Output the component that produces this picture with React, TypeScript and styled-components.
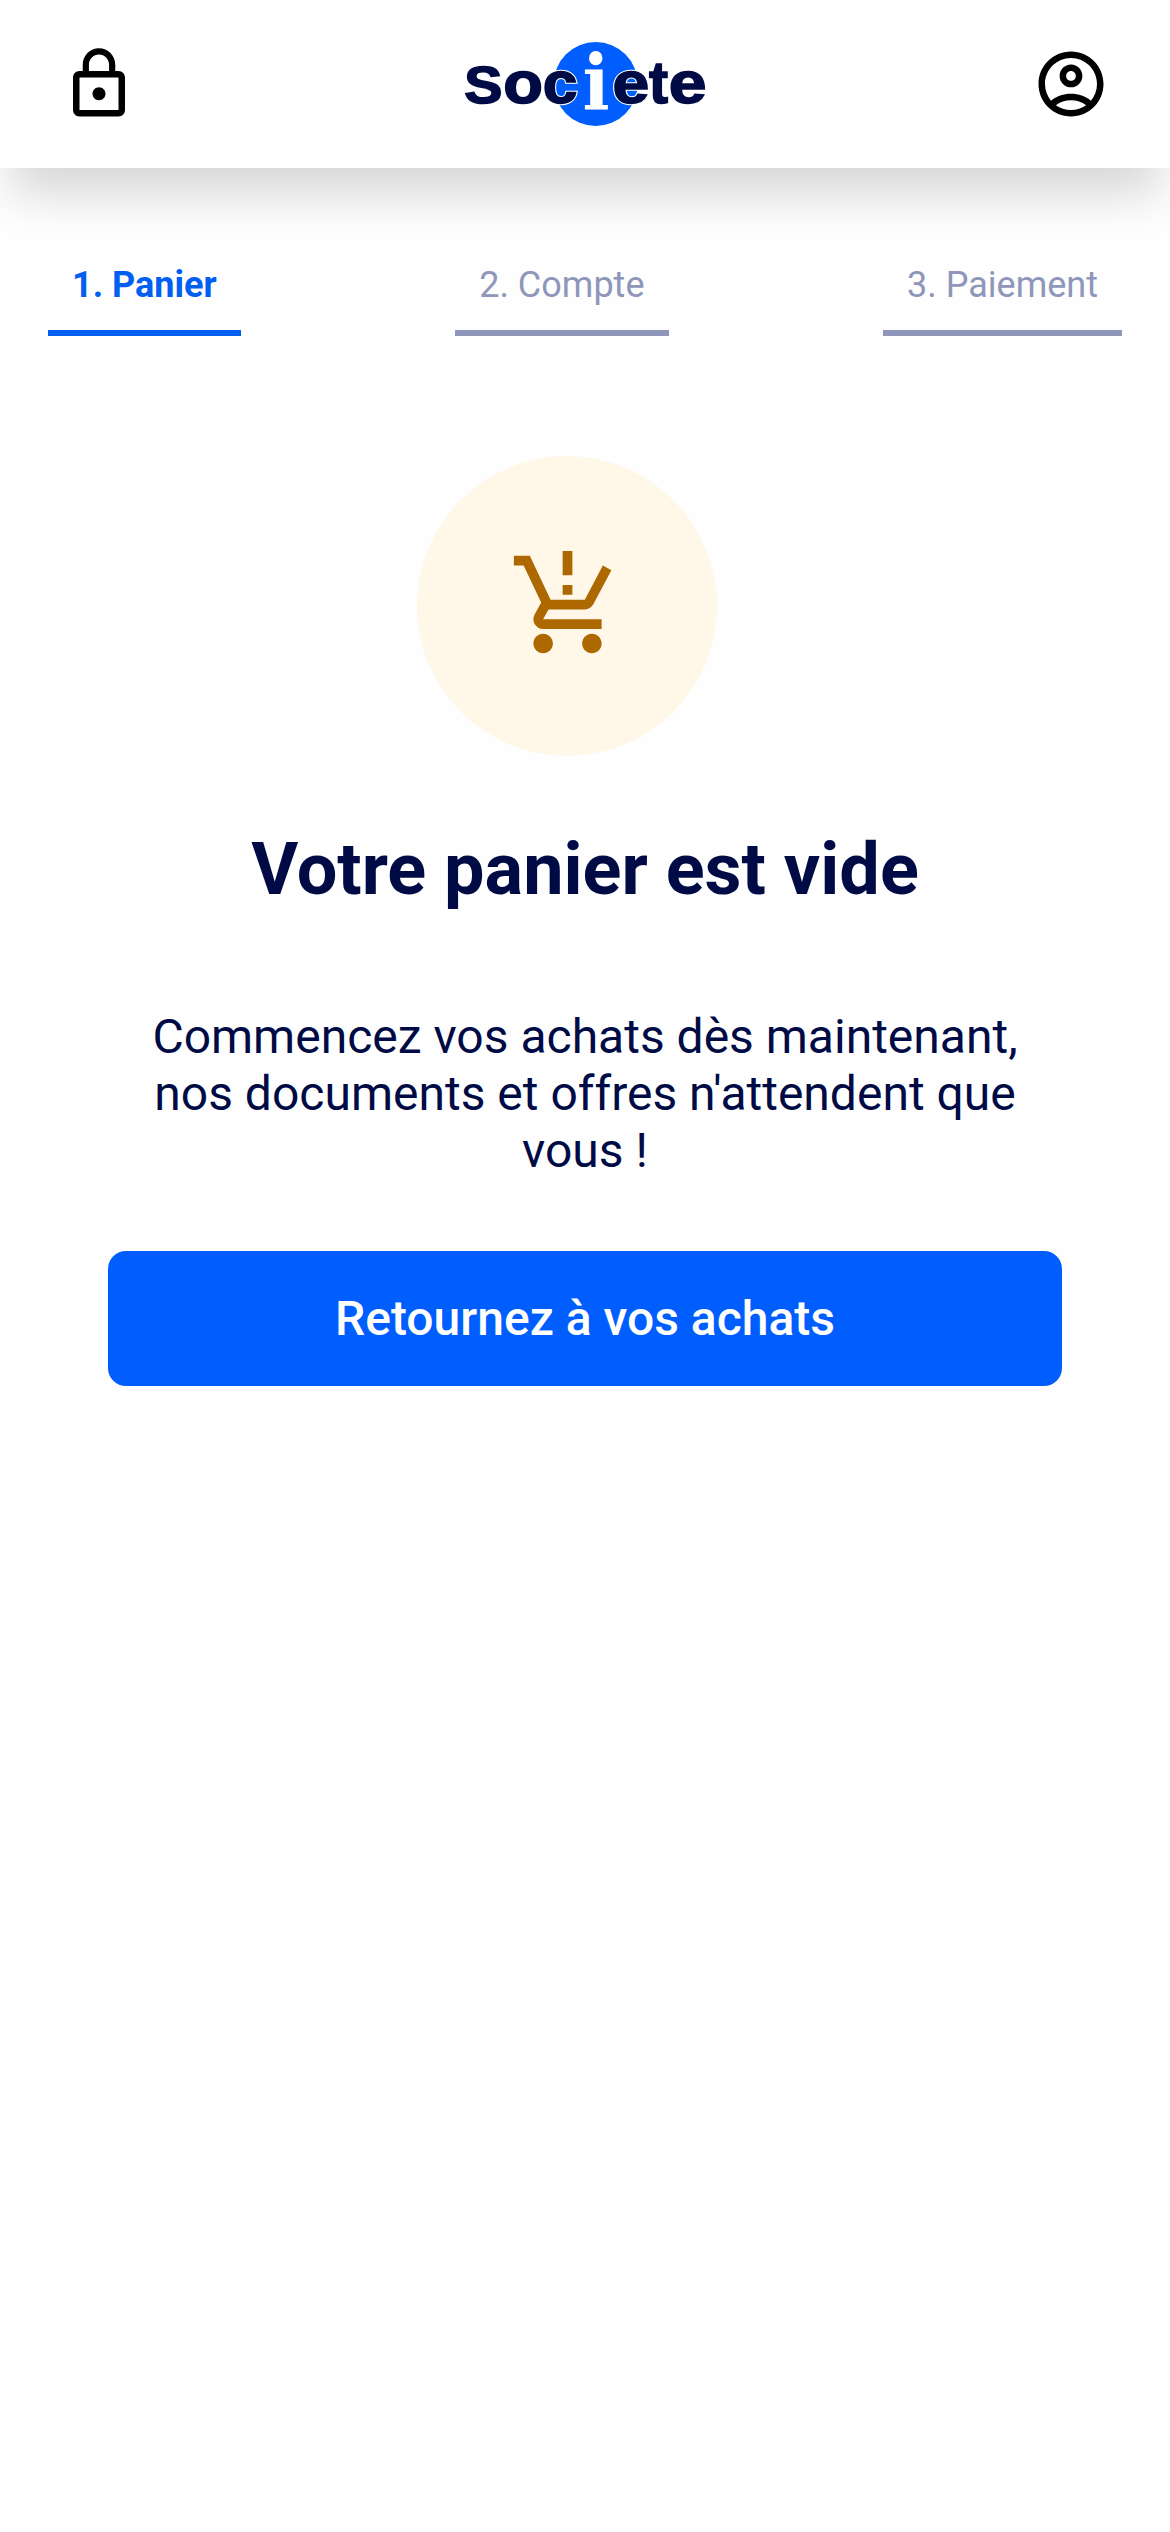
import React from "react";
import styled, { createGlobalStyle } from "styled-components";

const GlobalStyle = createGlobalStyle`
  *, *::before, *::after { box-sizing: border-box; }
  html, body { margin: 0; padding: 0; background: #fefefe; }
  body { font-family: Roboto, "Liberation Sans", sans-serif; color: #000b45; }
`;

const Page = styled.div`
  display: flex;
  flex-direction: column;
  width: 100%;
  min-height: 2532px;
  overflow-x: hidden;
`;

const Header = styled.header`
  display: flex;
  align-items: center;
  justify-content: space-between;
  height: 168px;
  padding: 0 60px;
  background: #fff;
  box-shadow: 0 36px 45px -10px rgba(0, 0, 0, 0.155);
`;

const HeaderIcon = styled.svg`
  display: block;
  width: 78px;
  height: 78px;
  fill: #000;
`;

const Logo = styled.svg`
  display: block;
  width: 246px;
  height: 90px;
`;

const LogoLetter = styled.text<{ $outline?: boolean }>`
  font-family: "Liberation Sans", Arial, sans-serif;
  font-weight: 700;
  fill: ${(p) => (p.$outline ? "#fff" : "#000b45")};
  stroke: ${(p) => (p.$outline ? "#fff" : "#000b45")};
  stroke-width: ${(p) => (p.$outline ? 3.6 : 1.6)}px;
`;

const LogoAccent = styled.text`
  font-family: "DejaVu Serif", serif;
  font-weight: 700;
  fill: #fff;
`;

const Steps = styled.nav`
  display: flex;
  justify-content: space-between;
  padding: 84px 48px 0;
`;

const Step = styled.span<{ $active?: boolean }>`
  padding: 11px 24px 22px;
  border-bottom: 6px solid ${(p) => (p.$active ? "#005ef0" : "#8e96b9")};
  color: ${(p) => (p.$active ? "#005ef0" : "#8e96b9")};
  font-size: 36px;
  line-height: 45px;
  font-weight: ${(p) => (p.$active ? 700 : 400)};
  white-space: nowrap;
`;

const EmptyCart = styled.main`
  display: flex;
  flex-direction: column;
  align-items: center;
  padding: 120px 108px 0;
`;

const CartBadge = styled.div`
  display: flex;
  align-items: center;
  justify-content: center;
  width: 300px;
  height: 300px;
  margin-right: 36px;
  padding-bottom: 3px;
  border-radius: 50%;
  background: #fff7e8;
`;

const CartIcon = styled.svg`
  display: block;
  width: 117px;
  height: 117px;
  fill: #ad6800;
`;

const Title = styled.h1`
  margin: 72px 0 0;
  font-size: 72px;
  line-height: 84px;
  font-weight: 700;
  text-align: center;
`;

const Message = styled.p`
  width: 900px;
  margin: 96px 0 0;
  font-size: 48px;
  line-height: 57px;
  text-align: center;
`;

const BackButton = styled.button`
  width: 100%;
  height: 135px;
  margin-top: 72px;
  padding: 0;
  border: 0;
  border-radius: 18px;
  background: #005eff;
  color: #fff;
  font: 500 48px/57px Roboto, "Liberation Sans", sans-serif;
`;

const letters = [
  { ch: "S", x: 24.3, size: 52.5, stretch: 1.09 },
  { ch: "o", x: 63.2, size: 59, stretch: 1.1 },
  { ch: "c", x: 102.8, size: 59, stretch: 1.06 },
  { ch: "e", x: 172.5, size: 59, stretch: 1.12 },
  { ch: "t", x: 209, size: 59, stretch: 0.97 },
  { ch: "e", x: 228.8, size: 59, stretch: 1.15 },
];

function BrandLogo() {
  const glyphs = (outline: boolean) =>
    letters.map((l, i) => (
      <LogoLetter
        key={i}
        $outline={outline}
        aria-hidden={outline}
        fontSize={l.size}
        transform={`translate(${l.x} 63.8) scale(${l.stretch} 1)`}
      >
        {l.ch}
      </LogoLetter>
    ));
  return (
    <Logo viewBox="22 0 246 90" overflow="visible" role="img" aria-label="Societe">
      <circle cx="155.7" cy="45" r="42" fill="#005eff" />
      <LogoAccent fontSize="76" textAnchor="middle" transform="translate(156 70.3) scale(0.94 1)">
        i
      </LogoAccent>
      {glyphs(true)}
      {glyphs(false)}
    </Logo>
  );
}

export default function App() {
  return (
    <>
      <GlobalStyle />
      <Page>
        <Header>
          <HeaderIcon viewBox="0 0 24 24">
            <path d="M12 17c1.1 0 2-.9 2-2s-.9-2-2-2-2 .9-2 2 .9 2 2 2zm6-9h-1V6c0-2.76-2.24-5-5-5S7 3.24 7 6v2H6c-1.1 0-2 .9-2 2v10c0 1.1.9 2 2 2h12c1.1 0 2-.9 2-2V10c0-1.1-.9-2-2-2zM8.9 6c0-1.71 1.39-3.1 3.1-3.1s3.1 1.39 3.1 3.1v2H8.9V6zM18 20H6V10h12v10z" />
          </HeaderIcon>
          <BrandLogo />
          <HeaderIcon viewBox="0 0 24 24">
            <path d="M12 2C6.48 2 2 6.48 2 12s4.48 10 10 10 10-4.48 10-10S17.52 2 12 2zM7.35 18.5C8.66 17.56 10.26 17 12 17s3.34.56 4.65 1.5c-1.31.94-2.91 1.5-4.65 1.5s-3.34-.56-4.65-1.5zm10.79-1.38C16.45 15.8 14.32 15 12 15s-4.45.8-6.14 2.12C4.7 15.73 4 13.95 4 12c0-4.42 3.58-8 8-8s8 3.58 8 8c0 1.95-.7 3.73-1.86 5.12z" />
            <path d="M12 6c-1.93 0-3.5 1.57-3.5 3.5S10.07 13 12 13s3.5-1.57 3.5-3.5S13.93 6 12 6zm0 5c-.83 0-1.5-.67-1.5-1.5S11.17 8 12 8s1.5.67 1.5 1.5S12.83 11 12 11z" />
          </HeaderIcon>
        </Header>
        <Steps>
          <Step $active>1. Panier</Step>
          <Step>2. Compte</Step>
          <Step>3. Paiement</Step>
        </Steps>
        <EmptyCart>
          <CartBadge>
            <CartIcon viewBox="0 0 24 24">
              <path d="M13 10h-2V8h2v2zm0-4h-2V1h2v5zM7 18c-1.1 0-1.99.9-1.99 2S5.9 22 7 22s2-.9 2-2-.9-2-2-2zm10 0c-1.1 0-1.99.9-1.99 2s.89 2 1.99 2 2-.9 2-2-.9-2-2-2zM8.1 13h7.45c.75 0 1.41-.41 1.75-1.03L21 4.96 19.25 4l-3.7 7H8.53L4.27 2H1v2h2l3.6 7.59-1.35 2.44C4.52 15.37 5.48 17 7 17h12v-2H7l1.1-2z" />
            </CartIcon>
          </CartBadge>
          <Title>Votre panier est vide</Title>
          <Message>Commencez vos achats dès maintenant, nos documents et offres n'attendent que vous !</Message>
          <BackButton type="button">Retournez à vos achats</BackButton>
        </EmptyCart>
      </Page>
    </>
  );
}
